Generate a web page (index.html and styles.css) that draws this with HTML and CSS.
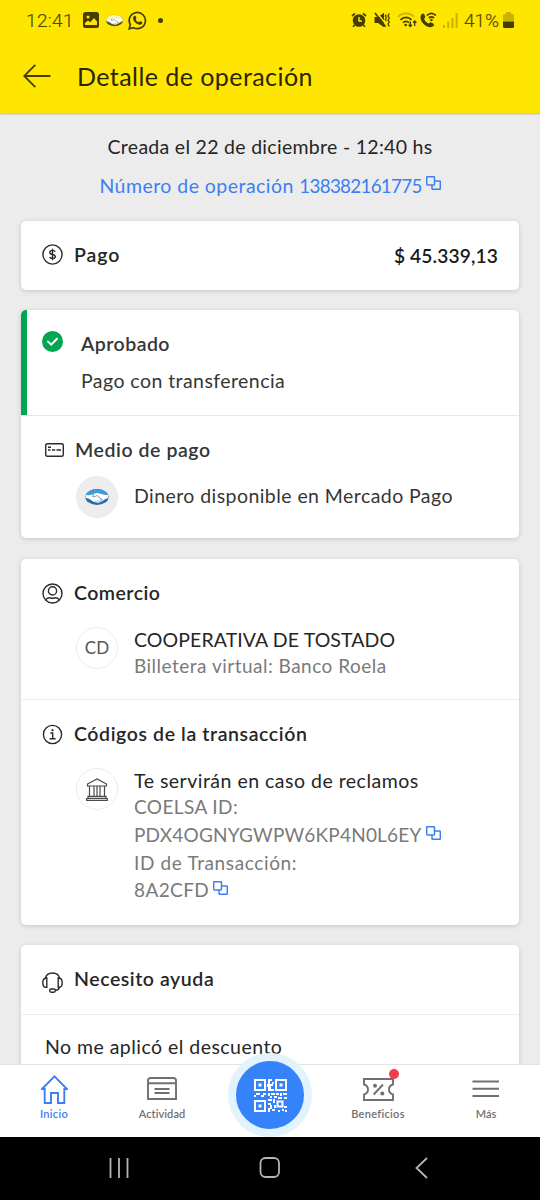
FILE: index.html
```
<!DOCTYPE html>
<html lang="es">
<head>
<meta charset="utf-8">
<title>Detalle de operación</title>
<link rel="stylesheet" href="styles.css">
</head>
<body>
<svg class="defs" width="0" height="0" aria-hidden="true">
  <symbol id="copy" viewBox="0 0 15 14">
    <rect x=".7" y=".7" width="7.8" height="8.2" rx=".8"/>
    <path d="M8.5 4.9h5a.8.8 0 0 1 .8.8v6.8a.8.8 0 0 1-.8.8H6.8a.8.8 0 0 1-.8-.8V8.9"/>
  </symbol>
  <symbol id="shake" viewBox="0 0 28 20">
    <ellipse cx="14" cy="10" rx="13" ry="8.8" class="ring"/>
    <path class="sky" d="M1.5 8C3 3.500 8 1.600 14 1.600S25 3.500 26.500 8C23 9 21 7.800 18.500 6.500 16 5.400 14.500 5.800 13 6.600 9 8.800 5 9 1.500 8Z"/>
    <path class="hands" d="M1.600 7.400C5 8.600 8 7.800 10.500 6.500 12.500 5.500 15 5.200 17.500 6.200 20.500 7.500 23 8.300 26.400 7.400L26.600 11C24 11.600 22.600 12.500 21 14 19.500 15.600 17.500 15 16.500 16 15 17 13.500 16 12.500 15.800 10.500 15.800 9.500 14.600 8 13.800 6 12.200 4 11.500 1.400 11.200Z"/>
    <path class="crease" d="M10.500 6.500 9 9.300C11 10 12.500 9.300 13.700 8.300L20.500 13.500M17.500 12.500l1.600 2M15 13.700l1.500 2M12.500 14.200l.8 1.500"/>
  </symbol>
</svg>
<div class="screen">
  <header class="top">
    <div class="status">
      <span class="clock">12:41</span>
      <svg class="st-photo" width="16" height="16" viewBox="0 0 16 16"><rect width="16" height="16" rx="2.500"/><circle class="y" cx="5" cy="5" r="1.600"/><path class="y" d="M2 13V11l3-2.500 2.200 1.800L11 6l3 3.500V13Z"/></svg>
      <svg class="st-shake" width="19" height="13" viewBox="0 0 28 20"><use href="#shake"/></svg>
      <svg class="st-wa" width="19" height="19" viewBox="0 0 19 19"><path class="l" d="M1.200 17.800 2.300 13.600A8.100 8.100 0 1 1 5.500 16.700Z"/><path d="M6.300 5c.8-.5 1.200-.2 1.500.5l.6 1.400c.2.600-.7 1.200-.7 1.500.6 1.300 1.700 2.200 3 2.800.5 0 1-1.200 1.500-1l1.800.9c.6.300.3 1.200 0 1.700-.7 1-2.200 1.200-3.300.8C8 12.600 6.200 10.800 5.200 8.400 4.800 7 5.300 5.600 6.300 5Z"/></svg>
      <span class="more"></span>
      <span class="spring"></span>
      <svg class="st-alarm" width="16" height="16" viewBox="0 0 16 16"><circle cx="8" cy="8.500" r="6.300"/><path class="l" d="m1 4 3-2.600M15 4l-3-2.600M3.800 12.800l-1.800 2M12.200 12.800l1.800 2"/><path class="yl" d="M8 5v4h3"/></svg>
      <svg class="st-mute" width="17" height="16" viewBox="0 0 17 16"><path d="M.5 5h3.500L10 .8v14.400L4 11H.5Z"/><path class="yl" d="m2.500 0 10 13"/><path class="l" d="m1 1 10.500 13.800"/><path class="l thin" d="M12.300 2.500 11.300 4l1 1.500-1 1.700 1 1.700M15.300 1.500 14 4l1.300 2L14 8l1.300 2L14 12l1.300 2.500"/></svg>
      <svg class="st-wifi" width="20" height="16" viewBox="0 0 20 16"><path class="l dim" d="M1 4.800C5.500.2 12.500.2 17 4.800"/><path class="l" d="M3.500 7.800c3.200-3.200 7.800-3.200 11 0M6 10.700c2-1.800 4-1.800 6 0"/><circle cx="8.700" cy="13" r="1.300"/><path class="l thin" d="M13.300 9.500v5m-1.700-1.700 1.700 1.700 1.700-1.700M17.700 14V9m-1.700 1.700L17.700 9l1.700 1.700"/></svg>
      <svg class="st-call" width="17" height="16" viewBox="0 0 17 16"><path d="M1.300 2.500C2.600 1 3.700 1.200 4.400 2.600l.8 2c.3 1-1 1.700-1 2.300.7 2.200 2.300 3.700 4.500 4.500.7 0 1.300-1.400 2.300-1l2.200 1c1.200.6 1.200 1.800 0 2.800-3 2.200-7 .6-9.600-2.200C1 9.300-.5 5.500 1.300 2.500Z"/><path class="l" d="M6.800 3.500c2.800-2.700 6.400-2.700 9.200 0M8.800 6c1.600-1.300 3.600-1.300 5.200 0"/><circle cx="11.400" cy="8" r="1.200"/></svg>
      <svg class="st-signal dim" width="15" height="15" viewBox="0 0 15 15"><path d="M0 12h2v3H0ZM4.200 8.500h2V15h-2ZM8.400 5h2v10h-2ZM12.600 0h2v15h-2Z"/></svg>
      <span class="pct">41%</span>
      <svg class="st-batt" width="11" height="16" viewBox="0 0 11 16"><path class="dim" d="M3 0h5v2h1.500A1.500 1.500 0 0 1 11 3.500V9.500H0V3.500A1.500 1.500 0 0 1 1.500 2H3Z"/><path d="M0 9.500h11v5a1.500 1.500 0 0 1-1.500 1.500h-8A1.500 1.500 0 0 1 0 14.500Z"/></svg>
    </div>
    <div class="appbar">
      <svg class="back" width="28" height="24" viewBox="0 0 28 24"><path d="M12.300.9 1.200 12l11.100 11.100M1.200 12H27.500"/></svg>
      <h1>Detalle de operación</h1>
    </div>
  </header>

  <main class="content">
    <div class="created">Creada el 22 de diciembre - 12:40 hs</div>
    <div class="opnum">Número de operación <span class="digits">138382161775</span><svg class="copy" width="15" height="14"><use href="#copy"/></svg></div>

    <section class="card pay">
      <svg class="ic" width="21" height="21" viewBox="0 0 21 21"><circle cx="10.500" cy="10.500" r="9.600"/><path d="M13.200 7.800c-.5-1-1.500-1.400-2.700-1.400-1.500 0-2.700.7-2.700 2s1 1.800 2.700 2.100 2.800.8 2.800 2.100-1.200 2-2.800 2c-1.400 0-2.500-.5-2.900-1.500M10.500 4.700v11.600"/></svg>
      <h2 class="t-pago">Pago</h2>
      <strong class="amount">$ 45.339,13</strong>
    </section>

    <section class="card method">
      <div class="approved">
        <svg class="ok" width="21" height="21" viewBox="0 0 21 21"><circle cx="10.500" cy="10.500" r="10.500"/><path d="m6 10.600 3.200 3.100 5.800-6"/></svg>
        <div>
          <h2 class="t-aprobado">Aprobado</h2>
          <p class="body">Pago con transferencia</p>
        </div>
      </div>
      <div class="means">
        <div class="head">
          <svg class="ic cardic" width="19" height="14" viewBox="0 0 19 14"><rect x=".7" y=".7" width="17.600" height="12.600" rx="1.500"/><path d="M3 4.300h3M3 7h2.500M7 7h3.200M11.500 7H16"/></svg>
          <h2 class="t-medio">Medio de pago</h2>
        </div>
        <div class="row">
          <span class="avatar filled"><svg width="26" height="18" viewBox="0 0 28 20"><use href="#shake"/></svg></span>
          <p class="body soft">Dinero disponible en Mercado Pago</p>
        </div>
      </div>
    </section>

    <section class="card shop">
      <div class="seller">
        <div class="head">
          <svg class="ic" width="21" height="21" viewBox="0 0 21 21"><circle cx="10.500" cy="10.500" r="9.500"/><circle cx="10.500" cy="7.900" r="4.100"/><path d="M3.800 17c.6-1.500 1.700-2.200 3.300-2.200 1.200 0 1.800.5 3.400.5s2.200-.5 3.400-.5c1.600 0 2.700.7 3.300 2.200"/></svg>
          <h2 class="t-comercio">Comercio</h2>
        </div>
        <div class="row">
          <span class="avatar">CD</span>
          <div class="lines">
            <p class="l-coop">COOPERATIVA DE TOSTADO</p>
            <p class="grey l-bill">Billetera virtual: Banco Roela</p>
          </div>
        </div>
      </div>
      <div class="codes">
        <div class="head">
          <svg class="ic" width="21" height="21" viewBox="0 0 21 21"><circle cx="10.500" cy="10.500" r="9.100"/><path d="M8.300 9h2.400v5.700M7.600 14.800h6"/><circle class="dot" cx="10.500" cy="6.200" r="1.100"/></svg>
          <h2 class="t-codigos">Códigos de la transacción</h2>
        </div>
        <div class="row">
          <span class="avatar"><svg class="bank" width="22" height="23" viewBox="0 0 22 23"><path d="M1.500 8V6L11 1l9.500 5v2ZM3.500 8v10M8 8v10M14 8v10M18.500 8v10M11 8v10M2 18.300h18v2H2ZM.7 20.500h20.600v1.800H.7Z"/></svg></span>
          <div class="lines">
            <p class="l-te">Te servirán en caso de reclamos</p>
            <p class="grey l-coelsa">COELSA ID:</p>
            <p class="grey tall l-pdx">PDX4OGNYGWPW6KP4N0L6EY<svg class="copy" width="15" height="14"><use href="#copy"/></svg></p>
            <p class="grey tall l-id">ID de Transacción:</p>
            <p class="grey tall l-8a">8A2CFD<svg class="copy" width="15" height="14"><use href="#copy"/></svg></p>
          </div>
        </div>
      </div>
    </section>

    <section class="card help">
      <div class="head">
        <svg class="ic" width="21" height="21" viewBox="0 0 21 21"><path d="M3.300 6.600C4 3 6.700 1 10.500 1s6.500 2 7.200 5.600M4.800 6v9.300H3.500C1.600 15.300.8 13.500.8 10.600S1.800 6 4.800 6ZM16.200 6v9.300h1.300c1.900 0 2.700-1.800 2.700-4.700S19.200 6 16.200 6ZM17.400 15.300c-.4 2-1.700 2.900-4 3"/><rect x="7.600" y="17" width="5.800" height="3.200" rx="1.600"/></svg>
        <h2 class="t-ayuda">Necesito ayuda</h2>
      </div>
      <p class="option">No me aplicó el descuento</p>
    </section>
  </main>

  <nav class="tabs">
    <a class="tab active"><span class="pic"><svg width="27" height="29" viewBox="0 0 27 29"><path d="M1 14 13.500 1.400 26 14H23.300V28H17V18H10V28H3.700V14Z"/></svg></span><span class="t-inicio">Inicio</span></a>
    <a class="tab"><span class="pic"><svg width="30" height="24" viewBox="0 0 30 24"><path d="M1 22V3.500A2.500 2.500 0 0 1 3.500 1h23A2.500 2.500 0 0 1 29 3.500V22ZM1 6.300h28M7.500 12h15M7.500 16h15"/></svg></span><span class="t-act">Actividad</span></a>
    <a class="scan"><svg width="33" height="33" viewBox="0 0 33 33">
      <path class="q" d="M1 1h10v10H1ZM22 1h10v10H22ZM1 22h10v10H1Z"/>
      <path class="m" d="M4.500 4.500h3v3h-3ZM25.500 4.500h3v3h-3ZM4.500 25.500h3v3h-3ZM14 0h4v2h-2v3h3v2h-2v3h3v2h-6V8h-1V5h1ZM18 3h1.800v2H18ZM0 16h2v2H0ZM2 14h4v2H2ZM7 16h3v2H7ZM9 14h3v2H9ZM14 14h2v3h-2ZM17 14h4v2h-4ZM22 14h3v2h-3ZM26 14h2v3h-2ZM29 14h4v2h-4ZM16 17h2v2h-2ZM20 17h3v2h-3ZM24 18h4v2h-4ZM30 18h3v2h-3ZM14 20h4v2h-4ZM19 20h2v4h-2ZM14 24h3v2h-3ZM16 26h2v4h-2ZM14 29h2v4h-2ZM18 30h3v2h-3ZM20 26h2v3h-2ZM28 30h2v2h-2ZM31 31h2v2h-2ZM30 27h3v2h-3ZM24 31h2v2h-2Z"/>
      <path class="q" d="M23.500 22.500h5v5h-5Z"/></svg></a>
    <a class="tab"><span class="pic"><svg width="31" height="23" viewBox="0 0 31 23"><path d="M1 1h29v5.500c-2.500.7-4 2.500-4 5s1.500 4.300 4 5V22H1v-5.500c2.500-.7 4-2.500 4-5s-1.500-4.300-4-5ZM20 6.500l-9.300 10"/><circle class="fill" cx="12" cy="7.800" r="2"/><circle class="fill" cx="19.300" cy="15.500" r="2"/></svg><i class="badge"></i></span><span class="t-ben">Beneficios</span></a>
    <a class="tab"><span class="pic"><svg width="28" height="18" viewBox="0 0 28 18"><path d="M.5 1.500h26.500M.5 8.700h26.500M.5 16h26.500"/></svg></span><span class="t-mas">Más</span></a>
  </nav>

  <footer class="sysbar">
    <svg width="20" height="20" viewBox="0 0 20 20"><path d="M1.500 0v20M10 0v20M18.500 0v20"/></svg>
    <svg width="22" height="21" viewBox="0 0 22 21"><rect x="1.500" y="1" width="18.500" height="19" rx="5"/></svg>
    <svg width="13" height="22" viewBox="0 0 13 22"><path d="M12 1 1.500 11 12 21"/></svg>
  </footer>
</div>
</body>
</html>
```
FILE: styles.css
```
* { box-sizing: border-box; }
body, h1, h2, p { margin: 0; }
body { background: #000; font-family: Lato, "Open Sans", sans-serif; color: #262626; }
svg { display: block; flex: none; }
.defs { position: absolute; }
.screen { width: 540px; height: 1200px; display: flex; flex-direction: column; overflow: hidden; background: #ececec; }

/* Header */
.top { height: 113px; flex: none; background: #ffe600; box-shadow: 0 1px 2px rgba(0,0,0,.25); z-index: 1; }
.status { height: 40px; display: flex; align-items: center; padding: 0 26px; color: #514900; fill: #453e00; font: 400 19px Roboto, sans-serif; }
.status .l { fill: none; stroke: #453e00; stroke-width: 1.7; }
.status .thin { stroke-width: 1.300; }
.status .y { fill: #ffe600; }
.status .yl { fill: none; stroke: #ffe600; stroke-width: 1.500; }
.dim { opacity: .3; }
.clock { width: 57px; font-weight: 300; letter-spacing: .35px; -webkit-text-stroke: .2px #514900; }
.st-shake { margin-left: 6px; --ring: #5d5518; --sky: #fff6b0; --crease: #6b6560; }
.st-wa { margin-left: 4px; }
.more { width: 5px; height: 5px; border-radius: 50%; background: #453e00; margin-left: 11px; }
.spring { flex: 1; }
.st-mute { margin-left: 7px; }
.st-wifi { margin-left: 6px; }
.st-call { margin-left: 3px; }
.st-signal { margin-left: 6px; }
.pct { margin-left: 6px; width: 38px; letter-spacing: -.1px; font-weight: 300; -webkit-text-stroke: .2px #514900; }
.st-batt { margin-left: 1px; }
.appbar { height: 73px; display: flex; align-items: center; padding-left: 23px; }
.back { fill: none; stroke: #453e00; stroke-width: 1.800; margin-top: -1px; }
h1 { margin-left: 26px; margin-top: -2px; font-size: 25px; font-weight: 400; line-height: 30px; letter-spacing: .44px; color: #2a2600; }

/* Handshake mark, recoloured through custom properties */
.ring { fill: var(--ring, #2b6cb0); }
.sky { fill: var(--sky, #3f9bd8); }
.hands { fill: #fff; }
.crease { fill: none; stroke: var(--crease, #3a6ea5); stroke-width: .8; }

/* Content */
.content { flex: 1; min-height: 0; overflow: hidden; padding: 22px 21px 0; display: flex; flex-direction: column; font-size: 19.5px; line-height: 24px; }
.created { text-align: center; letter-spacing: .29px; }
.opnum { margin-top: 15px; text-align: center; letter-spacing: .46px; color: #3c7ff0; white-space: nowrap; }
.digits { font-size: 18.800px; letter-spacing: -.7px; }
.copy { display: inline-block; vertical-align: 2.500px; margin-left: 4px; fill: none; stroke: #3c7ff0; stroke-width: 1.500; }
.opnum .copy { vertical-align: 3.500px; }
.card { flex: none; background: #fff; border-radius: 5px; box-shadow: 0 1px 5px rgba(0,0,0,.16); margin-bottom: 21px; }
h2 { font-size: 19.5px; font-weight: 600; line-height: 24px; }
.ic { fill: none; stroke: #2b2b2b; stroke-width: 1.400; }
.ic .dot { fill: #2b2b2b; stroke: none; }
.head { display: flex; gap: 11px; padding-left: 21px; align-items: center; height: 24px; }
.row { display: flex; padding-left: 55px; }
.avatar { flex: none; width: 42px; height: 42px; border-radius: 50%; border: 1px solid #ececec; display: flex; align-items: center; justify-content: center; margin-right: 16px; font-size: 17px; color: #555; }
.avatar.filled { background: #ededed; }
.bank { fill: none; stroke: #4a4a4a; stroke-width: 1.200; }

.pay { margin-top: 23px; height: 69px; padding: 0 21px; display: flex; align-items: center; margin-bottom: 20px; }
.pay .ic { margin-top: -3px; }
.t-pago { margin-left: 11px; letter-spacing: .95px; margin-top: -1px; }
.amount { margin-left: auto; font-size: 19.200px; font-weight: 600; letter-spacing: .12px; margin-top: 1px; color: #1a1a1a; }

.method { height: 228px; color: #363636; }
.approved { height: 105px; display: flex; padding: 22px 0 0 15px; border-left: 6px solid #00a650; border-top-left-radius: 5px; }
.ok { fill: #00a650; margin: -1px 18px 0 0; }
.ok path { fill: none; stroke: #fff; stroke-width: 2; stroke-linecap: round; }
.t-aprobado { letter-spacing: .46px; }
.approved .body { margin-top: 13px; letter-spacing: .44px; }
.means { border-top: 1px solid #e6e6e6; padding-top: 22px; }
.means .head { padding-left: 24px; }
.t-medio { letter-spacing: .56px; }
.means .row { margin-top: 14px; align-items: center; }
.means .row .body { letter-spacing: .43px; padding-bottom: 2px; }

.shop { height: 366px; margin-bottom: 20px; }
.seller { height: 140px; padding-top: 22px; }
.t-comercio { letter-spacing: .47px; }
.seller .row { margin-top: 22px; }
.lines { line-height: 26px; }
.grey { font-size: 19px; color: #7a7a7a; white-space: nowrap; }
.l-coop { letter-spacing: .1px; }
.l-bill { letter-spacing: .49px; line-height: 26px; }
.codes { border-top: 1px solid #ededed; padding-top: 22px; }
.t-codigos { letter-spacing: .6px; }
.codes .row { margin-top: 22px; }
.l-te { letter-spacing: .49px; }
.l-coelsa { letter-spacing: .4px; }
.tall { line-height: 27.500px; }
.l-pdx { letter-spacing: .2px; margin-top: 1px; }
.l-id { letter-spacing: .63px; }
.l-8a { letter-spacing: .4px; }

.help { padding-top: 22px; height: 140px; }
.t-ayuda { letter-spacing: .56px; }
.help .ic { margin-top: 6px; }
.option { margin-top: 23px; border-top: 1px solid #ededed; padding: 20px 0 0 24px; letter-spacing: .46px; }

/* Tab bar */
.tabs { flex: none; height: 73px; display: grid; grid-template-columns: repeat(5, 108px); background: #fff; border-top: 1px solid #e3e3e3; font-size: 11px; font-weight: 600; line-height: 14px; color: #707070; position: relative; }
.tab { display: flex; flex-direction: column; align-items: center; padding-top: 9px; gap: 3px; fill: none; stroke: #707070; stroke-width: 1.900; }
.active { color: #3c7ff0; stroke: #3c7ff0; }
.pic { position: relative; height: 30px; display: flex; align-items: center; }
.fill { fill: #707070; stroke: none; }
.badge { position: absolute; right: -5px; top: -5px; width: 10px; height: 10px; border-radius: 50%; background: #f23d4f; }
.t-inicio { letter-spacing: .3px; }
.t-act { letter-spacing: .08px; }
.t-ben { letter-spacing: .3px; }
.scan { justify-self: center; margin-top: -12px; width: 84px; height: 84px; border-radius: 50%; border: 8px solid #e3f3fd; background: #3483fa; display: flex; align-items: center; justify-content: center; }
.q { fill: none; stroke: #fff; stroke-width: 2; }
.m { fill: #fff; }

/* System navigation */
.sysbar { flex: none; height: 63px; padding-bottom: 2px; background: #000; display: grid; grid-template-columns: repeat(3, 151px); justify-content: center; justify-items: center; align-items: center; fill: none; stroke: #b5b5b5; stroke-width: 1.800; }
```
